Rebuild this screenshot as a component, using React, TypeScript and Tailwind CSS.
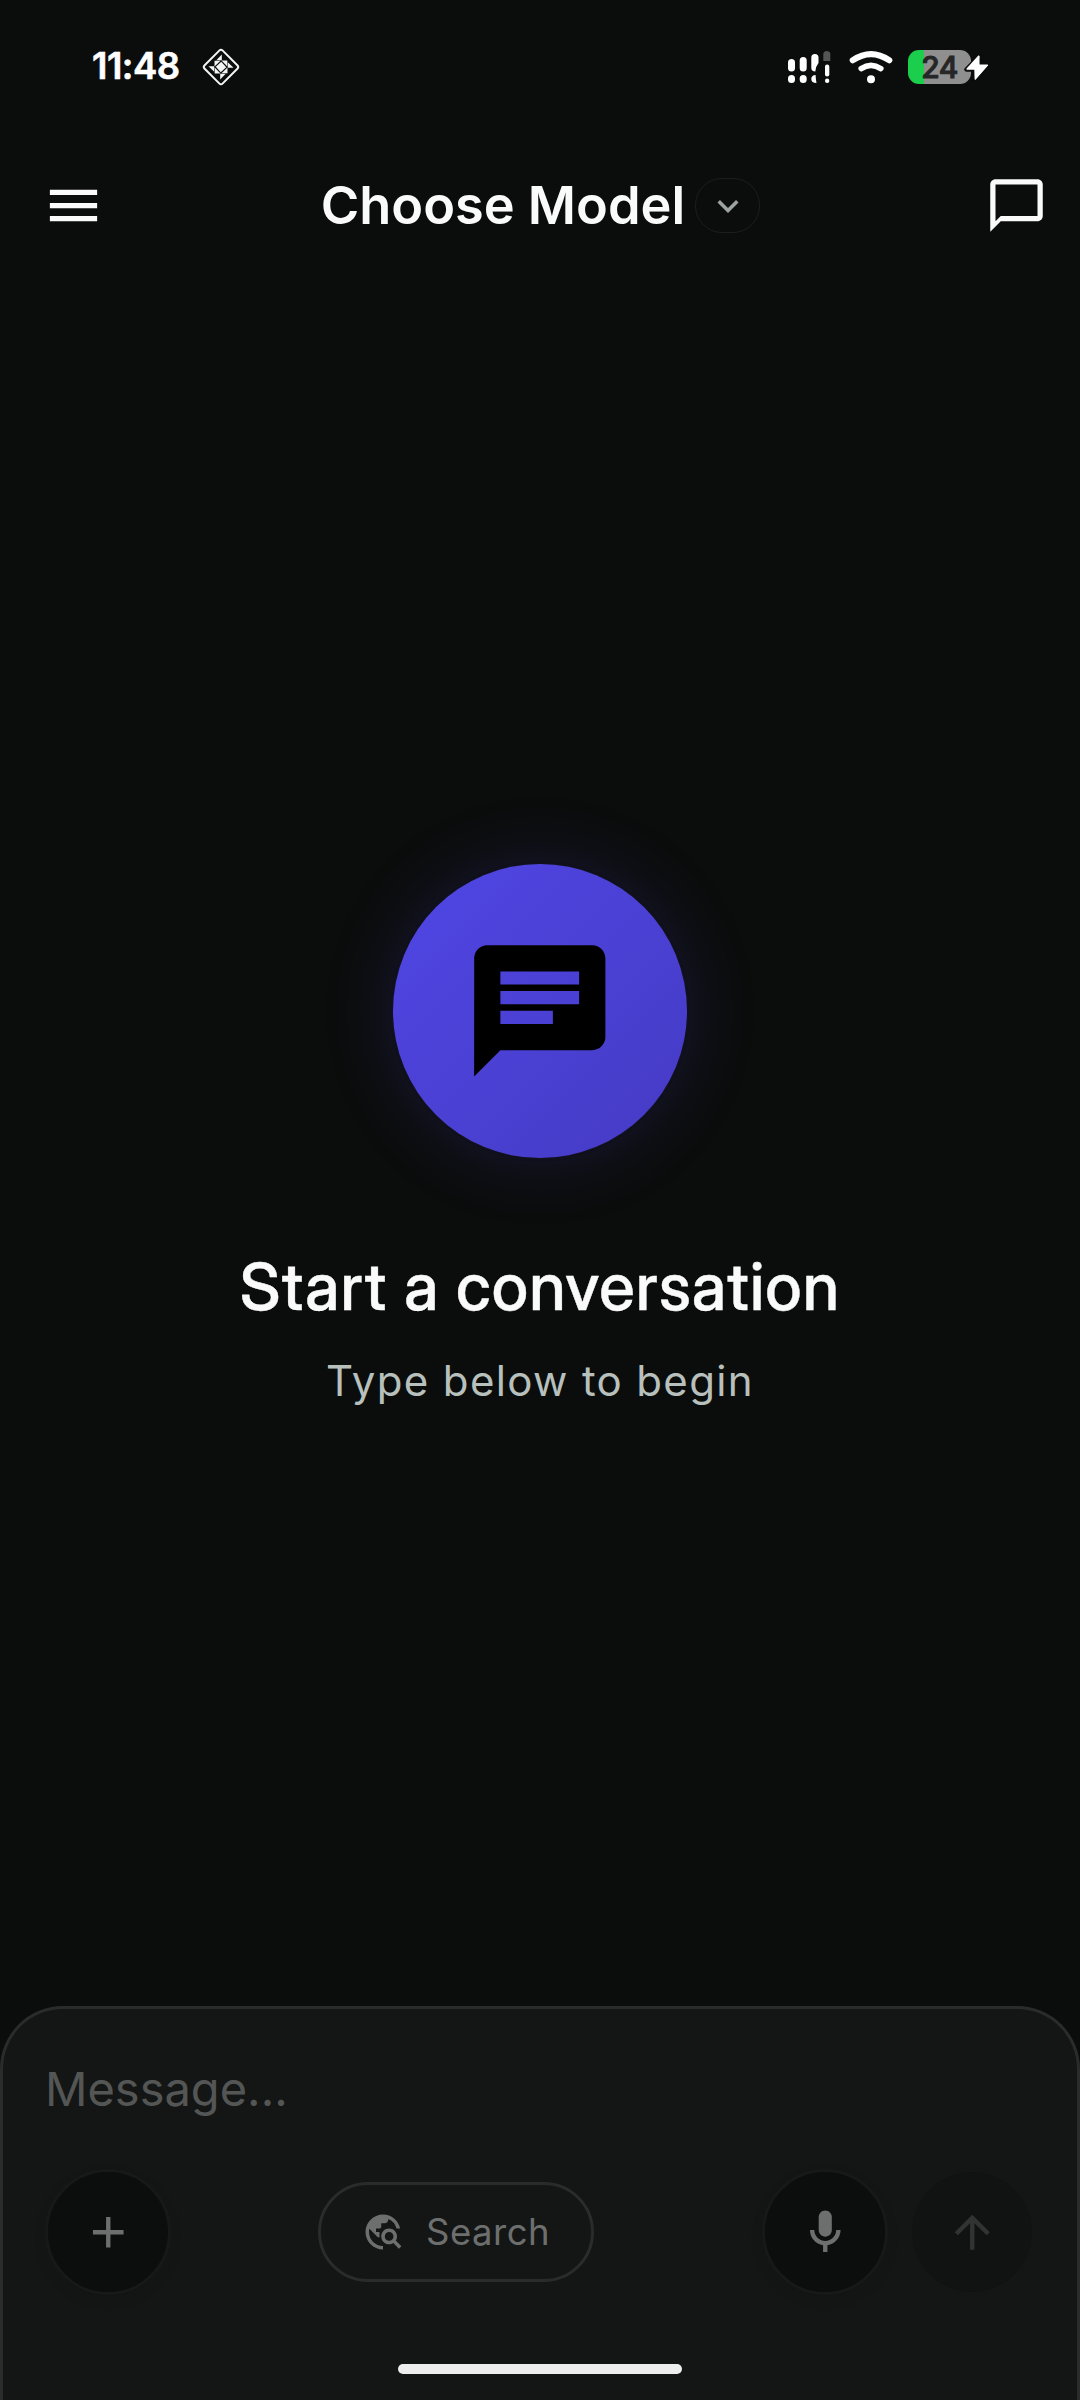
import React from "react";
import { MdAdd, MdArrowUpward, MdChat, MdChatBubbleOutline, MdExpandMore, MdMenu, MdTravelExplore } from "react-icons/md";

function DiamondIcon() {
  return (
    <svg width="38" height="38" viewBox="-19 -19 38 38" className="ml-[22px]">
      <rect x="-12.8" y="-12.8" width="25.6" height="25.6" rx="2.5" transform="rotate(45)" fill="none" stroke="#f4f4f4" strokeWidth="2" />
      {[0, 90, 180, 270].map((angle) => (
        <g key={angle} transform={`rotate(${angle})`} fill="#f4f4f4">
          <path d="M0.800 -12.500V-6.800h-5.500z" />
          <path d="M-6.500 -6.300h6L-6.500 -0.500z" />
          <path d="M0 0V-5.500l5 5.500z" />
        </g>
      ))}
    </svg>
  );
}

function SignalIcon() {
  return (
    <svg width="44" height="34" viewBox="0 0 44 34" fill="#fff">
      <rect x="0" y="9" width="7" height="12.5" rx="3.5" />
      <rect x="0" y="25" width="7" height="8" rx="3.5" />
      <rect x="11.7" y="7" width="7" height="14.5" rx="3.5" />
      <rect x="11.7" y="25" width="7" height="8" rx="3.5" />
      <path d="M23.3 7.5a3.6 3.5 0 0 1 7.2 0v5.500q-2.600 3-3.200 8.500q-4-.4-4-3.500z" />
      <path d="M27.600 25q-4.300.3-4.300 4 0 3.900 5.200 4-.8-3.800-.9-8z" />
      <path d="M35.300 11V4.500a3.500 3.500 0 0 1 7 0V11z" fill="#545454" />
      <rect x="37" y="14.500" width="4.300" height="12" rx="2.100" />
      <rect x="37" y="28.600" width="4.300" height="4.400" rx="2.100" />
    </svg>
  );
}

function WifiIcon() {
  return (
    <svg width="44" height="33" viewBox="0 0 44 33" fill="none" stroke="#fff" strokeLinecap="round" className="ml-[17px]">
      <path d="M3.700 9.300Q22 -3 40.300 9.300" strokeWidth="6" />
      <path d="M12.200 17.600Q22 11.300 31.800 17.600" strokeWidth="5.600" />
      <circle cx="22" cy="28.300" r="4" fill="#fff" stroke="none" />
    </svg>
  );
}

function Battery() {
  return (
    <div className="relative ml-[15px] h-[34px] w-[80px]">
      <div className="flex h-[34px] w-[63px] items-center justify-center overflow-hidden rounded-[11px] bg-[linear-gradient(90deg,#1bce4b_16px,#8f8f8f_16px)]">
        <span className="text-[30px] font-medium leading-none tracking-[-0.5px] text-[#262626] [-webkit-text-stroke:1px_#262626] [stroke-linejoin:round]">24</span>
      </div>
      <svg className="absolute left-[55px] top-[2px]" width="28" height="32" viewBox="0 0 28 32">
        <path d="M16.500 4L3.500 17.500h8L12 28 25 13H15.500z" fill="#fff" stroke="#0b0d0c" strokeWidth="4.500" strokeLinejoin="round" paintOrder="stroke" />
        <path d="M15.800 4L4 17h8.200L12.200 27 24.500 13.200H16z" fill="#fff" stroke="#fff" strokeWidth="1.200" strokeLinejoin="round" />
      </svg>
    </div>
  );
}

function MicIcon() {
  return (
    <svg width="52.5" height="52.5" viewBox="0 0 24 24" fill="#6d6f6e">
      <path d="M12 14c1.660 0 3-1.340 3-3V5c0-1.660-1.340-3-3-3S9 3.340 9 5v6c0 1.660 1.340 3 3 3z" />
      <path d="M17 11c0 2.760-2.240 5-5 5s-5-2.240-5-5H5c0 3.530 2.610 6.430 6 6.920V21h2v-3.080c3.390-.49 6-3.390 6-6.920h-2z" />
    </svg>
  );
}

const roundButton =
  "flex size-[126px] items-center justify-center rounded-full border-[3px] border-[#171918] bg-[#0c0e0d] shadow-[0_5px_14px_rgba(0,0,0,0.08)]";

export default function App() {
  return (
    <div className="flex h-[2400px] w-[1080px] flex-col overflow-hidden bg-[#0b0d0c] font-['Inter',sans-serif] text-[#fafafa]">
      <div className="flex h-[134px] items-center pl-[92px] pr-[92px]">
        <span className="-mt-px text-[36.500px] font-semibold leading-none tracking-[-0.5px] text-white [-webkit-text-stroke:0.600px_white] [stroke-linejoin:round]">11:48</span>
        <DiamondIcon />
        <div className="ml-auto flex items-center">
          <SignalIcon />
          <WifiIcon />
          <Battery />
        </div>
      </div>

      <header className="flex h-[143px] items-center justify-between pl-[42px] pr-[32px]">
        <button><MdMenu size={63} /></button>
        <button className="mr-[9px] flex items-center gap-[10px]">
          <span className="text-[52.3px] font-semibold leading-none">Choose Model</span>
          <span className="flex h-[55px] w-[65px] items-center justify-center rounded-[27px] border border-[#1c1e1d] text-[#9ca3a0]">
            <MdExpandMore size={42} />
          </span>
        </button>
        <button><MdChatBubbleOutline size={63} /></button>
      </header>

      <main className="flex flex-1 flex-col items-center pt-[587px]">
        <div className="flex size-[294px] items-center justify-center rounded-full bg-linear-to-br from-[#5046e5] to-[#453bc4] text-black shadow-[0_0_72px_rgba(79,70,229,0.19)]">
          <MdChat size={157.5} />
        </div>
        <h1 className="mt-[90px] font-['Inter_Display','Inter',sans-serif] text-[65px] font-medium leading-[78px] tracking-[1.1px] [-webkit-text-stroke:0.4px_#fafafa]">Start a conversation</h1>
        <p className="mt-[29px] text-[42px] leading-[52px] tracking-[1.350px] text-[#b8c0bd]">Type below to begin</p>
      </main>

      <footer className="flex h-[394px] flex-col rounded-t-[63px] border-x-[3px] border-t-[3px] border-[#2a2c2b] bg-[#141615] px-[42px]">
        <div className="mt-[51px] text-[47px] leading-[58px] text-[#545655]">Message...</div>
        <div className="mt-[51px] flex items-center justify-between text-[#6d6f6e]">
          <button className={roundButton}><MdAdd size={52.5} /></button>
          <button className="mr-[21px] flex h-[100px] w-[276px] items-center gap-[22px] rounded-full border-[3px] border-[#2a2c2b] pl-[41px]">
            <MdTravelExplore size={42} />
            <span className="text-[36.500px] leading-none tracking-[0.500px]">Search</span>
          </button>
          <div className="flex gap-[21px]">
            <button className={roundButton}><MicIcon /></button>
            <button className="flex size-[126px] items-center justify-center rounded-full border-[3px] border-[#141615] bg-[#111312] text-[#313332]">
              <MdArrowUpward size={52.5} />
            </button>
          </div>
        </div>
        <div className="mx-auto mt-[69px] h-[10px] w-[284px] rounded-full bg-[#eeeeee]" />
      </footer>
    </div>
  );
}
